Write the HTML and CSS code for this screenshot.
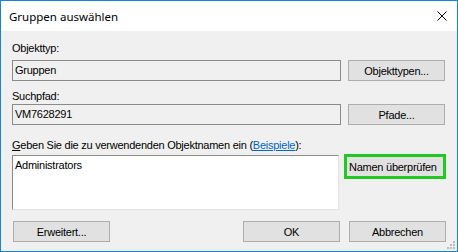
FILE: index.html
```html
<!DOCTYPE html>
<html lang="de">
<head>
    <meta charset="UTF-8">
    <title>Gruppen auswählen</title>
    <link rel="stylesheet" href="styles.css">
</head>
<body>
    <div class="dialog">
        <div class="titlebar">
            <span class="title">Gruppen auswählen</span>
            <svg class="close" width="10" height="10" viewBox="0 0 10 10">
                <path d="M0.5 0.5 L9.5 9.5 M9.5 0.5 L0.5 9.5" stroke="#000" stroke-width="1" fill="none"/>
            </svg>
        </div>

        <div class="content">
            <div class="label label-first">Objekttyp:</div>
            <div class="row">
                <div class="field">Gruppen</div>
                <button class="btn">Objekttypen...</button>
            </div>

            <div class="label label-second">Suchpfad:</div>
            <div class="row">
                <div class="field">VM7628291</div>
                <button class="btn">Pfade...</button>
            </div>

            <div class="label label-third"><u>G</u>eben Sie die zu verwendenden Objektnamen ein (<a href="#">Beispiele</a>):</div>
            <div class="row row-names">
                <div class="names">Administrators</div>
                <div class="highlight">
                    <button class="btn btn-check">Namen überprüfen</button>
                </div>
            </div>

            <div class="footer">
                <button class="btn btn-advanced">Erweitert...</button>
                <div class="footer-right">
                    <button class="btn">OK</button>
                    <button class="btn">Abbrechen</button>
                </div>
            </div>
        </div>

        <svg class="grip" width="9" height="9" viewBox="0 0 9 9">
            <rect x="7" y="1" width="2" height="2" fill="#bcbcbc"/>
            <rect x="4" y="4" width="2" height="2" fill="#bcbcbc"/>
            <rect x="7" y="4" width="2" height="2" fill="#bcbcbc"/>
            <rect x="1" y="7" width="2" height="2" fill="#bcbcbc"/>
            <rect x="4" y="7" width="2" height="2" fill="#bcbcbc"/>
            <rect x="7" y="7" width="2" height="2" fill="#bcbcbc"/>
        </svg>
    </div>
</body>
</html>
```

FILE: styles.css
```css
html, body {
    margin: 0;
    padding: 0;
    background-color: #ffffff;
}

.dialog {
    position: relative;
    width: 458px;
    height: 252px;
    box-sizing: border-box;
    border: 1px solid #1883d7;
    background-color: #f0f0f0;
    font-family: 'Liberation Sans', Arial, sans-serif;
    font-size: 11px;
    letter-spacing: -0.25px;
    color: #000;
}

.titlebar {
    height: 30px;
    background-color: #ffffff;
    display: flex;
    align-items: center;
    justify-content: space-between;
    padding: 0 10px 0 8px;
}

.title {
    font-family: 'Noto Sans', 'Open Sans', sans-serif;
    font-size: 11.5px;
    letter-spacing: 0;
    color: #000;
    margin-top: 1px;
}

.close {
    display: block;
}

.content {
    padding: 11px 11px 0 11px;
}

.label {
    height: 13px;
    line-height: 13px;
    white-space: nowrap;
}

.label-first {
    margin-bottom: 5px;
}

.label-second {
    margin-top: 9px;
    margin-bottom: 1px;
}

.label-third {
    margin-top: 14px;
    margin-bottom: 2px;
}

.label a {
    color: #0066cc;
    text-decoration: underline;
}

.row {
    display: flex;
    gap: 7px;
    align-items: flex-start;
}

.field {
    width: 329px;
    height: 21px;
    box-sizing: border-box;
    border: 1px solid #8a8a8a;
    background-color: #f0f0f0;
    padding: 0 2px;
    line-height: 19px;
}

.btn {
    width: 97px;
    height: 21px;
    box-sizing: border-box;
    border: 1px solid #adadad;
    background-color: #e1e1e1;
    font-family: 'Liberation Sans', Arial, sans-serif;
    font-size: 11px;
    letter-spacing: -0.25px;
    color: #000;
    padding: 0;
    margin: 0;
}

.row-names {
    gap: 5px;
}

.names {
    width: 328px;
    height: 55px;
    margin-top: 1px;
    box-sizing: border-box;
    background-color: #ffffff;
    border-style: solid;
    border-width: 1px;
    border-color: #8a8a8a #e3e3e3 #e3e3e3 #8a8a8a;
    padding: 3px 2px;
    line-height: 13px;
}

.highlight {
    border: 3px solid #24c824;
    width: 96px;
    height: 19px;
}

.btn-check {
    width: 96px;
    height: 19px;
    border: none;
    text-align: left;
    padding-left: 2px;
}

.footer {
    display: flex;
    justify-content: space-between;
    margin-top: 11px;
}

.btn-advanced {
    margin-left: 1px;
}

.footer-right {
    display: flex;
    gap: 9px;
}

.grip {
    position: absolute;
    right: 2px;
    bottom: 2px;
}
```
